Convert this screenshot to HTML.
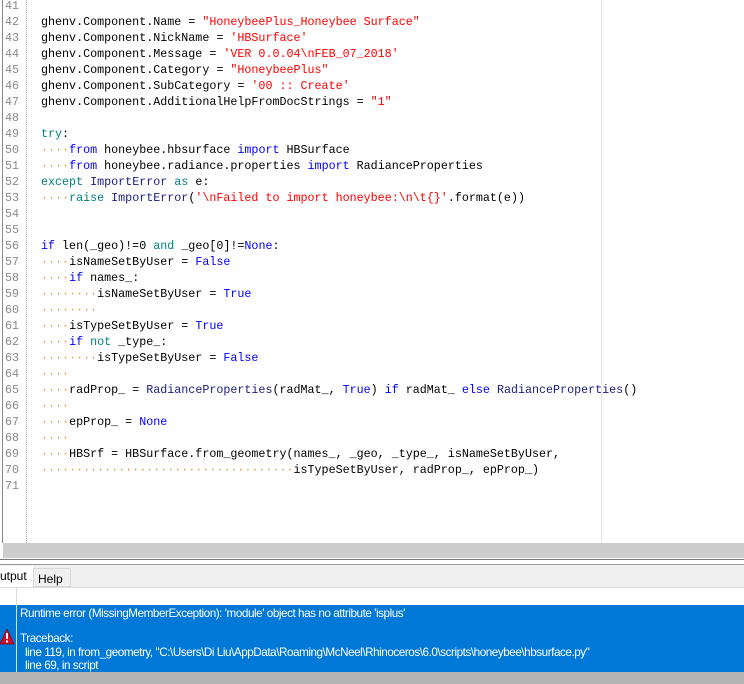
<!DOCTYPE html>
<html><head><meta charset="utf-8"><style>
*{margin:0;padding:0;box-sizing:border-box}
body{width:744px;height:684px;overflow:hidden;background:#fff;position:relative;font-family:"Liberation Sans",sans-serif}
.ed{position:absolute;left:0;top:0;width:744px;height:543px;background:#fff}
.lb{position:absolute;left:2px;top:0;width:1px;height:543px;background:#888}
.sep{position:absolute;left:26px;top:0;height:543px;border-left:1px dotted #aaa}
.vl{position:absolute;left:601px;top:0;width:1px;height:543px;background:#e3e3e3}
.ln{position:absolute;left:5px;font:11.7px/16px "Liberation Mono",monospace;color:#8a8a8a;white-space:pre}
.c{position:absolute;left:41px;font:11.7px/16px "Liberation Mono",monospace;color:#000;white-space:pre}
.k{color:#0000ff}.t{color:#008080}.s{color:#ff0000}.d{color:#d99a50}.n{color:#1c1c80}
.bar{position:absolute;left:3px;top:543px;width:741px;height:15px;background:#cdcdcd}
.h1{position:absolute;left:0;top:559px;width:744px;height:1px;background:#777}
.h2{position:absolute;left:0;top:564px;width:744px;height:1px;background:#999}
.tabs{position:absolute;left:0;top:565px;width:744px;height:22px;background:#f0f0f0}
.tabo{position:absolute;left:0;top:566px;width:33px;height:21px;background:#fff;font-size:12px;padding-top:3px}
.tabh{position:absolute;left:33px;top:568px;width:38px;height:19px;border:1px solid #d8d8d8;background:#f0f0f0;font-size:12px;padding:3px 0 0 4px}
.hl{position:absolute;left:0;top:587px;width:744px;height:1px;background:#dcdcdc}
.vs{position:absolute;left:16px;top:588px;width:1px;height:17px;background:#dcdcdc}
.err{position:absolute;left:0;top:605px;width:744px;height:67px;background:#0078d7}
.ev{position:absolute;left:16px;top:605px;width:1px;height:67px;background:#cfe3f5}
.et{position:absolute;left:20px;color:#fff;font-size:11.7px;letter-spacing:-0.45px;white-space:pre}
.bot{position:absolute;left:0;top:672px;width:744px;height:12px;background:#b4b4b4}
</style></head><body>
<div class="ed"></div><div class="lb"></div><div class="sep"></div><div class="vl"></div>
<div class="ln" style="top:-2px">41
42
43
44
45
46
47
48
49
50
51
52
53
54
55
56
57
58
59
60
61
62
63
64
65
66
67
68
69
70
71</div>
<div class="c" style="top:-2px">
ghenv.Component.Name = <span class="s">"HoneybeePlus_Honeybee Surface"</span>
ghenv.Component.NickName = <span class="s">'HBSurface'</span>
ghenv.Component.Message = <span class="s">'VER 0.0.04\nFEB_07_2018'</span>
ghenv.Component.Category = <span class="s">"HoneybeePlus"</span>
ghenv.Component.SubCategory = <span class="s">'00 :: Create'</span>
ghenv.Component.AdditionalHelpFromDocStrings = <span class="s">"1"</span>

<span class="t">try</span>:
<span class="d">····</span><span class="k">from</span> honeybee.hbsurface <span class="k">import</span> HBSurface
<span class="d">····</span><span class="k">from</span> honeybee.radiance.properties <span class="k">import</span> RadianceProperties
<span class="t">except</span> <span class="n">ImportError</span> <span class="t">as</span> e:
<span class="d">····</span><span class="t">raise</span> <span class="n">ImportError</span>(<span class="s">'\nFailed to import honeybee:\n\t{}'</span>.format(e))


<span class="k">if</span> len(_geo)!=0 <span class="t">and</span> _geo[0]!=<span class="k">None</span>:
<span class="d">····</span>isNameSetByUser = <span class="k">False</span>
<span class="d">····</span><span class="k">if</span> names_:
<span class="d">········</span>isNameSetByUser = <span class="k">True</span>
<span class="d">········</span>
<span class="d">····</span>isTypeSetByUser = <span class="k">True</span>
<span class="d">····</span><span class="k">if</span> <span class="t">not</span> _type_:
<span class="d">········</span>isTypeSetByUser = <span class="k">False</span>
<span class="d">····</span>
<span class="d">····</span>radProp_ = <span class="n">RadianceProperties</span>(radMat_, <span class="k">True</span>) <span class="k">if</span> radMat_ <span class="k">else</span> <span class="n">RadianceProperties</span>()
<span class="d">····</span>
<span class="d">····</span>epProp_ = <span class="k">None</span>
<span class="d">····</span>
<span class="d">····</span>HBSrf = HBSurface.from_geometry(names_, _geo, _type_, isNameSetByUser,
<span class="d">····································</span>isTypeSetByUser, radProp_, epProp_)
</div>
<div class="bar"></div><div class="h1"></div><div class="h2"></div>
<div class="tabs"></div>
<div class="tabo">utput</div>
<div class="tabh">Help</div>
<div class="hl"></div><div class="vs"></div>
<div class="err"></div><div class="ev"></div>
<svg style="position:absolute;left:0;top:629px" width="15" height="16" viewBox="0 0 15 16"><polygon points="7,0 14,15 0,15" fill="#c8102e" stroke="#8a0010" stroke-width="0.8"/><rect x="6" y="4" width="2" height="6" fill="#fff"/><rect x="6" y="11.5" width="2" height="2" fill="#fff"/></svg>
<div class="et" style="top:607px">Runtime error (MissingMemberException): 'module' object has no attribute 'isplus'</div>
<div class="et" style="top:632px">Traceback:</div>
<div class="et" style="top:646px;left:25px">line 119, in from_geometry, "C:\Users\Di Liu\AppData\Roaming\McNeel\Rhinoceros\6.0\scripts\honeybee\hbsurface.py"</div>
<div class="et" style="top:659px;left:25px">line 69, in script</div>
<div class="bot"></div>
</body></html>
